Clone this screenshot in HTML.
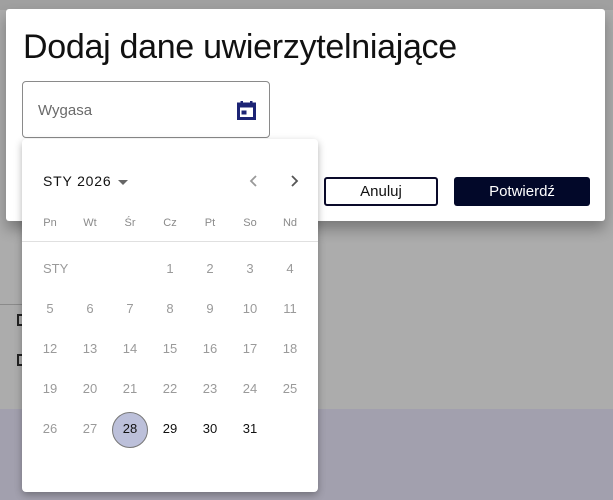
<!DOCTYPE html>
<html><head><meta charset="utf-8"><style>
*{box-sizing:border-box;margin:0;padding:0}
body{width:613px;height:500px;overflow:hidden;background:#acacac;font-family:"Liberation Sans",sans-serif;position:relative}
.top{position:absolute;left:0;top:0;width:613px;height:10px;background:#a0a0a0}
.band{position:absolute;left:0;top:409px;width:613px;height:91px;background:#a2a0ae}
.ln{position:absolute;left:0;top:304px;width:30px;height:1px;background:#8a8a8a}
.cb{position:absolute;left:17px;width:10px;height:12px;border:2px solid #222}
.dlg{position:absolute;left:6px;top:9px;width:599px;height:212px;background:#fff;border-radius:3px;box-shadow:0 8px 14px rgba(0,0,0,.3)}
h1{position:absolute;left:23px;top:28px;font-size:34px;font-weight:400;color:#111;letter-spacing:-.3px}
.inp{position:absolute;left:22px;top:81px;width:248px;height:57px;border:1px solid #8a8a8a;border-radius:4px;background:#fff}
.inp span{position:absolute;left:15px;top:20px;font-size:15px;color:#6a6a6a}
.btn{position:absolute;top:177px;height:29px;border-radius:3px;font-size:15px;text-align:center;line-height:29px}
.b1{left:324px;width:114px;border:2px solid #0a0a2a;color:#111;line-height:25px}
.b2{left:454px;width:136px;background:#020829;color:#fff}
.cal{position:absolute;left:22px;top:139px;width:296px;height:353px;background:#fff;border-radius:4px;box-shadow:0 3px 8px rgba(0,0,0,.3)}
.mh{position:absolute;left:21px;top:34px;font-size:14px;color:#111;letter-spacing:.8px}
.c{position:absolute;width:40px;text-align:center;font-size:13px;color:#9a9a9a}
.wd{top:78px;font-size:11px;color:#8a8a8a}
.hr{position:absolute;left:0;top:102px;width:296px;height:1px;background:#e0e0e0}
.k{color:#111}
.sel{position:absolute;left:90px;top:273px;width:36px;height:36px;border-radius:50%;background:#bcc0da;border:1px solid #777}
</style></head><body>
<div class="top"></div><div class="band"></div><div class="ln"></div>
<div class="cb" style="top:314px"></div><div class="cb" style="top:354px"></div>
<div class="dlg"></div>
<h1>Dodaj dane uwierzytelniające</h1>
<div class="inp"><span>Wygasa</span>
<svg style="position:absolute;left:214px;top:18px" width="19" height="20" viewBox="0 0 19 20"><rect x="1.5" y="4" width="16" height="14.5" fill="none" stroke="#1c2475" stroke-width="3"/><rect x="1.5" y="4" width="16" height="3.5" fill="#1c2475"/><rect x="3.5" y="1" width="2.5" height="4" fill="#1c2475"/><rect x="13" y="1" width="2.5" height="4" fill="#1c2475"/><rect x="4.5" y="10.5" width="5" height="4" fill="#1c2475"/></svg></div>
<div class="btn b1">Anuluj</div><div class="btn b2">Potwierdź</div>
<div class="cal">
<div class="mh">STY 2026 <span style="display:inline-block;width:0;height:0;border-left:5px solid transparent;border-right:5px solid transparent;border-top:5px solid #666;vertical-align:middle;margin-left:2px"></span></div>
<svg style="position:absolute;left:227px;top:35px" width="10" height="14"><path d="M7 2L2 7l5 5" fill="none" stroke="#999" stroke-width="1.8"/></svg>
<svg style="position:absolute;left:267px;top:35px" width="10" height="14"><path d="M3 2l5 5-5 5" fill="none" stroke="#555" stroke-width="1.8"/></svg>
<div class="c wd" style="left:8px">Pn</div><div class="c wd" style="left:48px">Wt</div><div class="c wd" style="left:88px">Śr</div><div class="c wd" style="left:128px">Cz</div><div class="c wd" style="left:168px">Pt</div><div class="c wd" style="left:208px">So</div><div class="c wd" style="left:248px">Nd</div>
<div class="hr"></div>
<div class="c" style="left:21px;top:122px;text-align:left">STY</div>
<div class="c" style="left:128px;top:122px">1</div><div class="c" style="left:168px;top:122px">2</div><div class="c" style="left:208px;top:122px">3</div><div class="c" style="left:248px;top:122px">4</div>
<div class="c" style="left:8px;top:162px">5</div><div class="c" style="left:48px;top:162px">6</div><div class="c" style="left:88px;top:162px">7</div><div class="c" style="left:128px;top:162px">8</div><div class="c" style="left:168px;top:162px">9</div><div class="c" style="left:208px;top:162px">10</div><div class="c" style="left:248px;top:162px">11</div>
<div class="c" style="left:8px;top:202px">12</div><div class="c" style="left:48px;top:202px">13</div><div class="c" style="left:88px;top:202px">14</div><div class="c" style="left:128px;top:202px">15</div><div class="c" style="left:168px;top:202px">16</div><div class="c" style="left:208px;top:202px">17</div><div class="c" style="left:248px;top:202px">18</div>
<div class="c" style="left:8px;top:242px">19</div><div class="c" style="left:48px;top:242px">20</div><div class="c" style="left:88px;top:242px">21</div><div class="c" style="left:128px;top:242px">22</div><div class="c" style="left:168px;top:242px">23</div><div class="c" style="left:208px;top:242px">24</div><div class="c" style="left:248px;top:242px">25</div>
<div class="sel"></div>
<div class="c" style="left:8px;top:282px">26</div><div class="c" style="left:48px;top:282px">27</div><div class="c k" style="left:88px;top:282px">28</div><div class="c k" style="left:128px;top:282px">29</div><div class="c k" style="left:168px;top:282px">30</div><div class="c k" style="left:208px;top:282px">31</div>
</div>
</body></html>
